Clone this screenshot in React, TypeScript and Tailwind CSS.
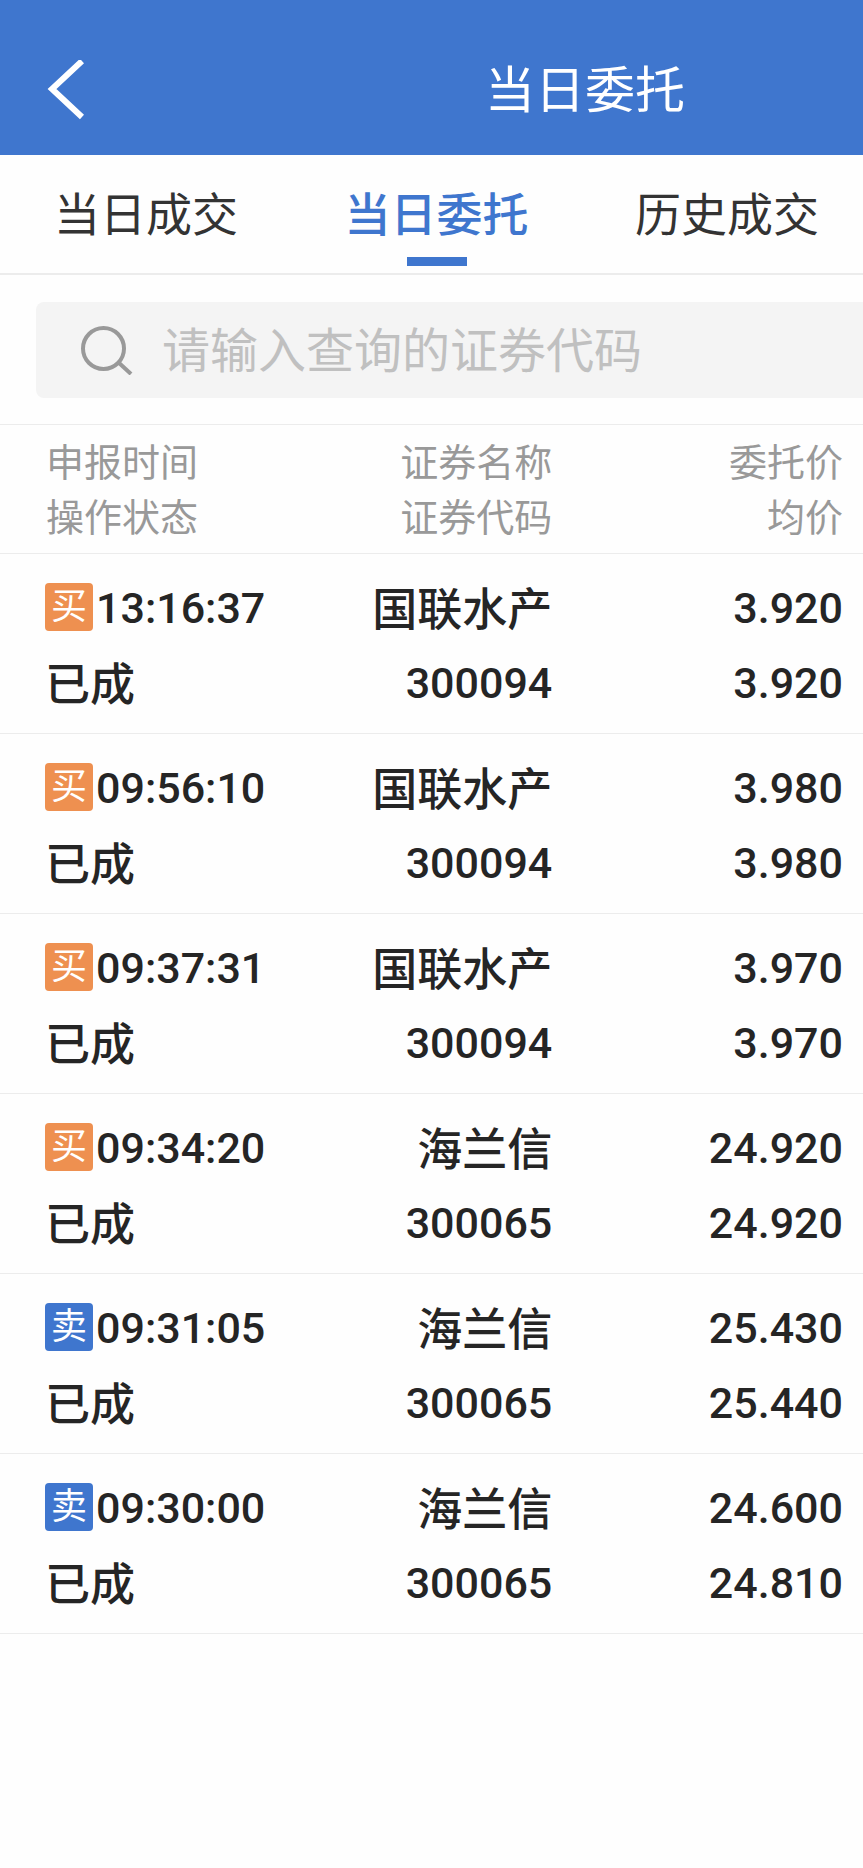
import { useState } from "react";

type Side = "买" | "卖";

interface Order {
  side: Side;
  time: string;
  status: string;
  name: string;
  code: string;
  price: string;
  avgPrice: string;
}

const TABS = ["当日成交", "当日委托", "历史成交"];

const ORDERS: Order[] = [
  { side: "买", time: "13:16:37", status: "已成", name: "国联水产", code: "300094", price: "3.920", avgPrice: "3.920" },
  { side: "买", time: "09:56:10", status: "已成", name: "国联水产", code: "300094", price: "3.980", avgPrice: "3.980" },
  { side: "买", time: "09:37:31", status: "已成", name: "国联水产", code: "300094", price: "3.970", avgPrice: "3.970" },
  { side: "买", time: "09:34:20", status: "已成", name: "海兰信", code: "300065", price: "24.920", avgPrice: "24.920" },
  { side: "卖", time: "09:31:05", status: "已成", name: "海兰信", code: "300065", price: "25.430", avgPrice: "25.440" },
  { side: "卖", time: "09:30:00", status: "已成", name: "海兰信", code: "300065", price: "24.600", avgPrice: "24.810" },
];

function Header() {
  return (
    <header className="flex h-[155px] items-center bg-[#3f76ce] pt-6 pl-[46px] text-white">
      <button type="button" aria-label="返回">
        <svg width="38" height="60" viewBox="0 0 38 60" fill="none" stroke="currentColor" strokeWidth="6">
          <path d="M36 1 6 29l30 28" />
        </svg>
      </button>
      <h1 className="mr-[178px] ml-auto pt-0.5 text-[50px] leading-[60px]">当日委托</h1>
    </header>
  );
}

function Tabs({ active, onChange }: { active: string; onChange: (tab: string) => void }) {
  return (
    <nav className="flex h-[120px] justify-between border-b-2 border-[#ececec] pr-11 pl-[54px] text-[46px] leading-[60px]">
      {TABS.map((tab) => (
        <button
          key={tab}
          type="button"
          onClick={() => onChange(tab)}
          className={
            tab === active
              ? "flex flex-col items-center pt-[30px] font-medium text-[#3f76ce]"
              : "flex flex-col items-center pt-[30px] text-[#333333]"
          }
        >
          {tab}
          {tab === active && <span className="mt-3 h-[9px] w-[60px] bg-[#3f76ce]" />}
        </button>
      ))}
    </nav>
  );
}

function SearchBar() {
  return (
    <div className="border-b border-[#ececec] pt-[27px] pb-[26px] pl-9">
      <label className="flex h-24 items-center rounded-l-lg bg-[#f4f4f4] pl-11">
        <svg
          width="54"
          height="50"
          viewBox="0 0 54 50"
          fill="none"
          stroke="#999999"
          strokeWidth="4"
          className="shrink-0"
          aria-hidden="true"
        >
          <circle cx="23.5" cy="23.5" r="20.5" />
          <path d="m38 37 13 12" />
        </svg>
        <input
          type="text"
          aria-label="证券代码"
          placeholder="请输入查询的证券代码"
          className="ml-7 h-full min-w-0 flex-1 bg-transparent pt-0.5 text-[48px] text-[#333333] outline-none placeholder:text-[#c0c0c0]"
        />
      </label>
    </div>
  );
}

function SideBadge({ side }: { side: Side }) {
  return (
    <span
      className={
        side === "买"
          ? "mb-0.5 flex size-12 items-center justify-center rounded bg-[#ee9050] text-[36px] leading-[48px] font-normal text-white"
          : "mb-0.5 flex size-12 items-center justify-center rounded bg-[#3f76ce] text-[36px] leading-[48px] font-normal text-white"
      }
    >
      {side}
    </span>
  );
}

function OrderRow({ order }: { order: Order }) {
  return (
    <tr className="h-[180px] border-b border-[#ececec] align-top">
      <td className="pt-[17px] pl-[45px]">
        <div className="flex h-[75px] items-center gap-[3px]">
          <SideBadge side={order.side} />
          <span>{order.time}</span>
        </div>
        <div className="h-[75px] text-[45px] leading-[79px]">{order.status}</div>
      </td>
      <td className="pt-[17px] text-right">
        <div className="h-[75px] text-[45px] leading-[79px]">{order.name}</div>
        <div className="h-[75px]">{order.code}</div>
      </td>
      <td className="pt-[17px] pr-5 text-right">
        <div className="h-[75px]">{order.price}</div>
        <div className="h-[75px]">{order.avgPrice}</div>
      </td>
    </tr>
  );
}

function OrderTable() {
  return (
    <table className="w-full table-fixed border-collapse">
      <thead className="text-[38px] leading-[55px] text-[#999999]">
        <tr className="h-[128px] border-b border-[#ececec] align-top">
          <th className="w-[32%] pt-[11px] pl-[46px] text-left font-normal">
            申报时间
            <br />
            操作状态
          </th>
          <th className="w-[32%] pt-[11px] text-right font-normal">
            证券名称
            <br />
            证券代码
          </th>
          <th className="w-[36%] pt-[11px] pr-5 text-right font-normal">
            委托价
            <br />
            均价
          </th>
        </tr>
      </thead>
      <tbody className="text-[43px] leading-[75px] font-medium text-[#252525]">
        {ORDERS.map((order) => (
          <OrderRow key={order.time} order={order} />
        ))}
      </tbody>
    </table>
  );
}

export default function App() {
  const [tab, setTab] = useState("当日委托");

  return (
    <div className="min-h-screen bg-[#fefefe] font-[Roboto,'Noto_Sans_CJK_SC',sans-serif]">
      <Header />
      <Tabs active={tab} onChange={setTab} />
      <SearchBar />
      <OrderTable />
    </div>
  );
}
